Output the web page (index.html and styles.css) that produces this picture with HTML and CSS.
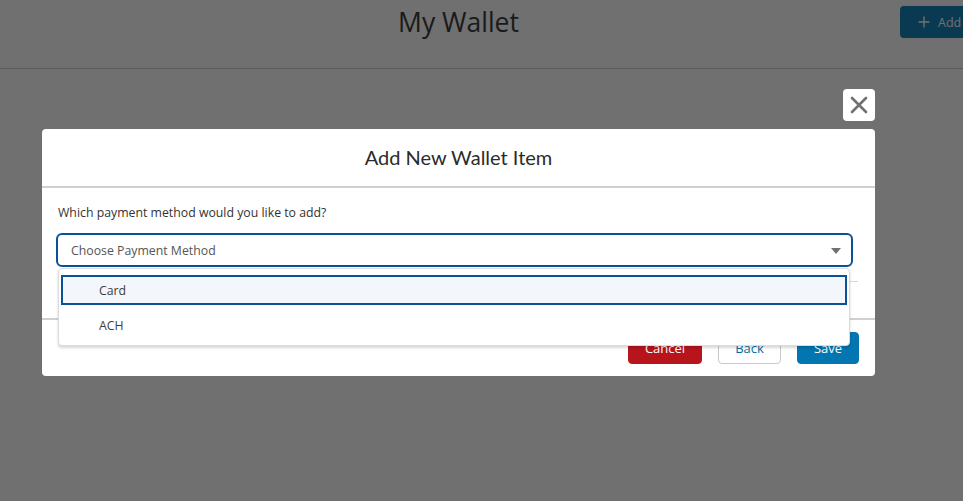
FILE: index.html
```html
<!DOCTYPE html>
<html lang="en">
<head>
<meta charset="utf-8">
<title>My Wallet</title>
<link rel="stylesheet" href="styles.css">
</head>
<body>
<div class="page">
  <header class="header-bar">
    <div class="page-header">
      <div class="header-side"></div>
      <h1 class="page-title">My Wallet</h1>
      <div class="header-actions">
        <button class="btn-add" type="button">
          <svg class="plus" width="12" height="12" viewBox="0 0 12 12" aria-hidden="true"><path d="M6 0.5V11.5M0.5 6H11.5" stroke="currentColor" stroke-width="1.4" fill="none"/></svg>
          <span>Add</span>
        </button>
      </div>
    </div>
  </header>
</div>

<div class="backdrop"></div>

<div class="modal-wrap">
  <button class="modal-close" type="button" aria-label="Close">
    <svg width="18" height="18" viewBox="0 0 18 18" aria-hidden="true"><path d="M2 2L16 16M16 2L2 16" stroke="#707070" stroke-width="2.6" stroke-linecap="round" fill="none"/></svg>
  </button>
  <section class="modal">
    <div class="modal-header">
      <h2 class="modal-title">Add New Wallet Item</h2>
    </div>
    <div class="modal-body">
      <label class="field-label">Which payment method would you like to add?</label>
      <div class="combo">
        <div class="select">
          <span>Choose Payment Method</span>
          <span class="caret"></span>
        </div>
        <ul class="listbox">
          <li class="option focused">Card</li>
          <li class="option">ACH</li>
        </ul>
      </div>
      <div class="divider"></div>
    </div>
    <div class="modal-footer">
      <button class="btn btn-cancel" type="button">Cancel</button>
      <button class="btn btn-back" type="button">Back</button>
      <button class="btn btn-save" type="button">Save</button>
    </div>
  </section>
</div>
</body>
</html>
```

FILE: styles.css
```css
* { box-sizing: border-box; }

html, body {
  margin: 0;
  padding: 0;
  background: #ffffff;
  overflow: hidden;
  height: 100%;
}

body {
  font-family: "Open Sans", "Liberation Sans", sans-serif;
  color: #3e3e3e;
  width: 963px;
}

.header-bar {
  height: 69px;
  border-bottom: 1px solid #cdcdcd;
}

.page-header {
  display: grid;
  grid-template-columns: 1fr auto 1fr;
  width: 917px;
  height: 68px;
}

.page-title {
  margin: 0;
  padding-top: 2px;
  font-weight: 400;
  font-size: 26.5px;
  line-height: 40px;
  color: #3e3e3e;
}

.header-actions {
  display: flex;
  justify-content: flex-end;
  padding-top: 6px;
  margin-right: -50px;
}

.btn-add {
  display: flex;
  align-items: center;
  gap: 8px;
  height: 32px;
  width: 67px;
  padding: 0 0 0 18px;
  border: none;
  border-radius: 4px;
  background: #1784ba;
  color: #ffffff;
  font-family: inherit;
  font-size: 12.5px;
  white-space: nowrap;
  overflow: hidden;
}

.plus { flex: none; }

.backdrop {
  position: fixed;
  inset: 0;
  background: rgba(0, 0, 0, 0.56);
}

.modal-wrap {
  position: fixed;
  top: 89px;
  left: 42px;
  width: 833px;
  display: flex;
  flex-direction: column;
  align-items: flex-end;
}

.modal-close {
  width: 32px;
  height: 32px;
  padding: 0;
  border: none;
  border-radius: 4px;
  background: #ffffff;
  display: flex;
  align-items: center;
  justify-content: center;
  margin-bottom: 8px;
}

.modal {
  width: 100%;
  background: #ffffff;
  border-radius: 4px;
}

.modal-header {
  height: 59px;
  border-bottom: 2px solid #d0d0d0;
  display: flex;
  align-items: center;
  justify-content: center;
}

.modal-title {
  margin: 0;
  font-family: Lato, "Open Sans", sans-serif;
  font-weight: 400;
  font-size: 20px;
  color: #2b2b2b;
  padding-bottom: 2px;
}

.modal-body {
  padding: 16px 22px 0 14px;
}

.field-label {
  display: block;
  font-size: 12.3px;
  line-height: 18px;
  color: #333333;
  margin-left: 2px;
  margin-bottom: 11px;
}

.combo {
  position: relative;
}

.select {
  height: 34px;
  border: 2px solid #0a5298;
  border-radius: 6px;
  padding: 0 10px 0 13px;
  display: flex;
  align-items: center;
  justify-content: space-between;
  font-size: 12.3px;
  color: #555555;
}

.caret {
  width: 0;
  height: 0;
  border-left: 5.5px solid transparent;
  border-right: 5.5px solid transparent;
  border-top: 6px solid #707070;
  margin-top: 2px;
}

.listbox {
  position: absolute;
  top: 35px;
  left: 2px;
  width: 792px;
  margin: 0;
  padding: 6px 2px 5px;
  list-style: none;
  background: #ffffff;
  border: 1px solid #dcdcdc;
  border-radius: 4px;
  box-shadow: 0 2px 3px rgba(0, 0, 0, 0.16);
  display: flex;
  flex-direction: column;
  gap: 5px;
  z-index: 2;
}

.option {
  height: 30px;
  padding-left: 38px;
  display: flex;
  align-items: center;
  font-size: 12.3px;
  color: #3e3e3e;
}

.option.focused {
  background: #f3f7fb;
  border: 2px solid #0a5298;
  padding-left: 36px;
}

.divider {
  margin: 14px -5px 36px 2px;
  border-top: 1px solid #d8d8d8;
}

.modal-footer {
  border-top: 2px solid #d0d0d0;
  padding: 12px 16px 12px;
  display: flex;
  justify-content: flex-end;
  gap: 16px;
}

.btn {
  height: 32px;
  border-radius: 4px;
  font-family: inherit;
  font-size: 13px;
  padding: 0;
}

.btn-cancel {
  width: 74px;
  background: #b8141b;
  border: 1px solid #b8141b;
  color: #ffffff;
}

.btn-back {
  width: 63px;
  background: #ffffff;
  border: 1px solid #c9c9c9;
  color: #0070a8;
}

.btn-save {
  width: 62px;
  background: #0176b0;
  border: 1px solid #0176b0;
  color: #ffffff;
}
```
